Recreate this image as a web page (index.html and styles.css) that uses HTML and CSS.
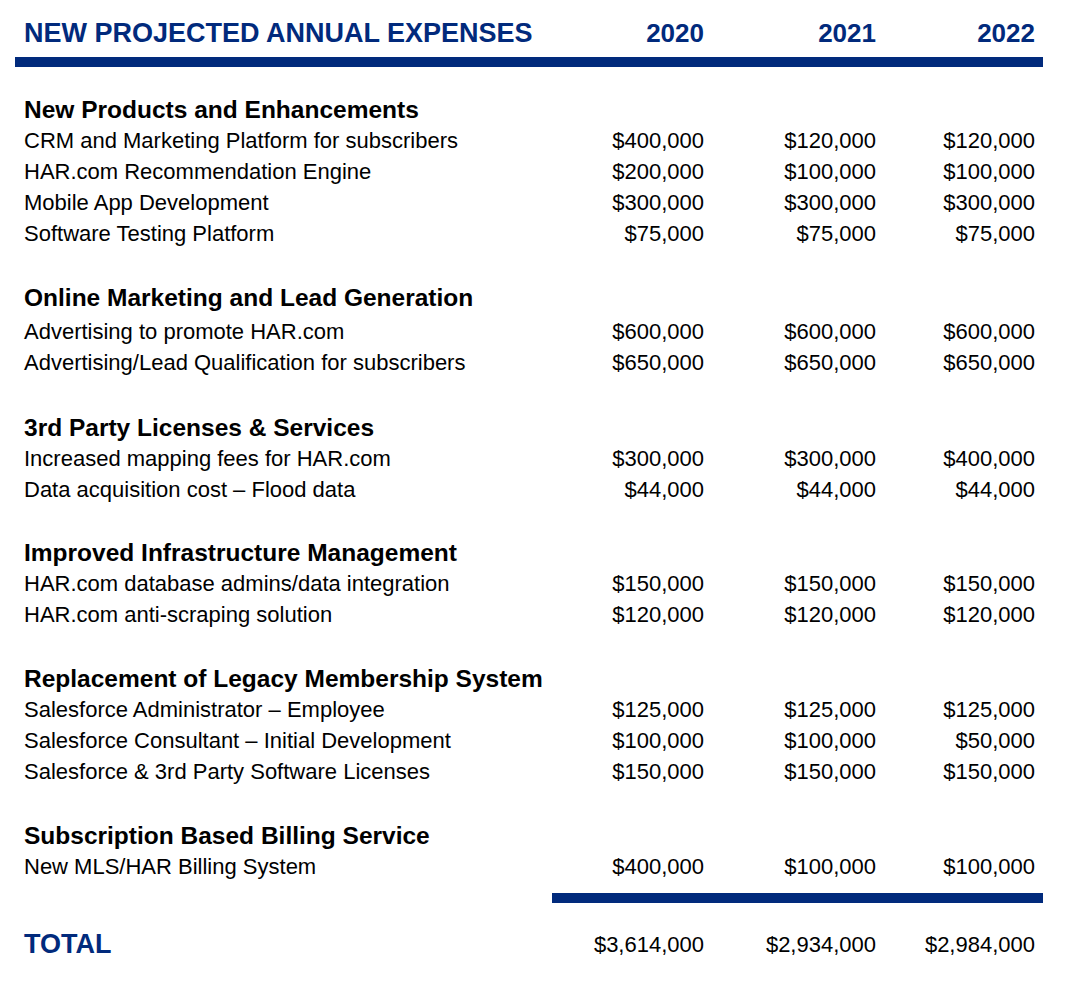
FILE: index.html
```html
<!DOCTYPE html>
<html lang="en">
<head>
<meta charset="utf-8">
<title>New Projected Annual Expenses</title>
<link rel="stylesheet" href="styles.css">
</head>
<body>
<div class="sheet">
  <div class="row head">
    <h1 class="title">NEW PROJECTED ANNUAL EXPENSES</h1>
    <span class="year">2020</span>
    <span class="year">2021</span>
    <span class="year">2022</span>
  </div>
  <div class="rule rule-top"></div>

  <section class="group first">
    <h2 class="group-title">New Products and Enhancements</h2>
    <div class="row"><span class="label">CRM and Marketing Platform for subscribers</span><span class="num">$400,000</span><span class="num">$120,000</span><span class="num">$120,000</span></div>
    <div class="row"><span class="label">HAR.com Recommendation Engine</span><span class="num">$200,000</span><span class="num">$100,000</span><span class="num">$100,000</span></div>
    <div class="row"><span class="label">Mobile App Development</span><span class="num">$300,000</span><span class="num">$300,000</span><span class="num">$300,000</span></div>
    <div class="row"><span class="label">Software Testing Platform</span><span class="num">$75,000</span><span class="num">$75,000</span><span class="num">$75,000</span></div>
  </section>

  <section class="group second">
    <h2 class="group-title">Online Marketing and Lead Generation</h2>
    <div class="row"><span class="label">Advertising to promote HAR.com</span><span class="num">$600,000</span><span class="num">$600,000</span><span class="num">$600,000</span></div>
    <div class="row"><span class="label">Advertising/Lead Qualification for subscribers</span><span class="num">$650,000</span><span class="num">$650,000</span><span class="num">$650,000</span></div>
  </section>

  <section class="group third">
    <h2 class="group-title">3rd Party Licenses &amp; Services</h2>
    <div class="row"><span class="label">Increased mapping fees for HAR.com</span><span class="num">$300,000</span><span class="num">$300,000</span><span class="num">$400,000</span></div>
    <div class="row"><span class="label">Data acquisition cost – Flood data</span><span class="num">$44,000</span><span class="num">$44,000</span><span class="num">$44,000</span></div>
  </section>

  <section class="group fourth">
    <h2 class="group-title">Improved Infrastructure Management</h2>
    <div class="row"><span class="label">HAR.com database admins/data integration</span><span class="num">$150,000</span><span class="num">$150,000</span><span class="num">$150,000</span></div>
    <div class="row"><span class="label">HAR.com anti-scraping solution</span><span class="num">$120,000</span><span class="num">$120,000</span><span class="num">$120,000</span></div>
  </section>

  <section class="group">
    <h2 class="group-title">Replacement of Legacy Membership System</h2>
    <div class="row"><span class="label">Salesforce Administrator – Employee</span><span class="num">$125,000</span><span class="num">$125,000</span><span class="num">$125,000</span></div>
    <div class="row"><span class="label">Salesforce Consultant – Initial Development</span><span class="num">$100,000</span><span class="num">$100,000</span><span class="num">$50,000</span></div>
    <div class="row"><span class="label">Salesforce &amp; 3rd Party Software Licenses</span><span class="num">$150,000</span><span class="num">$150,000</span><span class="num">$150,000</span></div>
  </section>

  <section class="group">
    <h2 class="group-title">Subscription Based Billing Service</h2>
    <div class="row"><span class="label">New MLS/HAR Billing System</span><span class="num">$400,000</span><span class="num">$100,000</span><span class="num">$100,000</span></div>
  </section>

  <div class="rule rule-bottom"></div>

  <div class="row total">
    <span class="total-label">TOTAL</span>
    <span class="num">$3,614,000</span>
    <span class="num">$2,934,000</span>
    <span class="num">$2,984,000</span>
  </div>
</div>
</body>
</html>
```

FILE: styles.css
```css
html, body {
  margin: 0;
  padding: 0;
  background: #ffffff;
}

body {
  font-family: "Liberation Sans", Arial, sans-serif;
  color: #000000;
  width: 1070px;
}

.sheet {
  padding-top: 16px;
}

.row {
  display: grid;
  grid-template-columns: 508px 172px 172px 159px;
  padding-left: 24px;
  align-items: center;
  font-size: 22px;
  line-height: 31px;
}

.label {
  white-space: nowrap;
}

.num {
  text-align: right;
  white-space: nowrap;
}

.head {
  line-height: 34px;
  color: #012a7c;
}

.title {
  margin: 0;
  font-size: 27px;
  font-weight: bold;
  white-space: nowrap;
  line-height: 34px;
}

.year {
  font-size: 26px;
  font-weight: bold;
  text-align: right;
}

.rule {
  height: 10px;
  background: #012a7c;
}

.rule-top {
  margin: 7px 0 0 15px;
  width: 1028px;
}

.group {
  margin-top: 33px;
}

.group.first {
  margin-top: 27px;
}

.group.second .group-title {
  padding-bottom: 3px;
}

.group.third {
  margin-top: 34px;
}

.group.fourth {
  margin-top: 32px;
}

.group-title {
  margin: 0;
  padding-left: 24px;
  font-size: 24.5px;
  font-weight: bold;
  line-height: 31px;
}

.rule-bottom {
  margin: 11px 0 0 552px;
  width: 491px;
}

.total {
  margin-top: 26px;
}

.total-label {
  font-size: 27px;
  font-weight: bold;
  color: #012a7c;
}
```
